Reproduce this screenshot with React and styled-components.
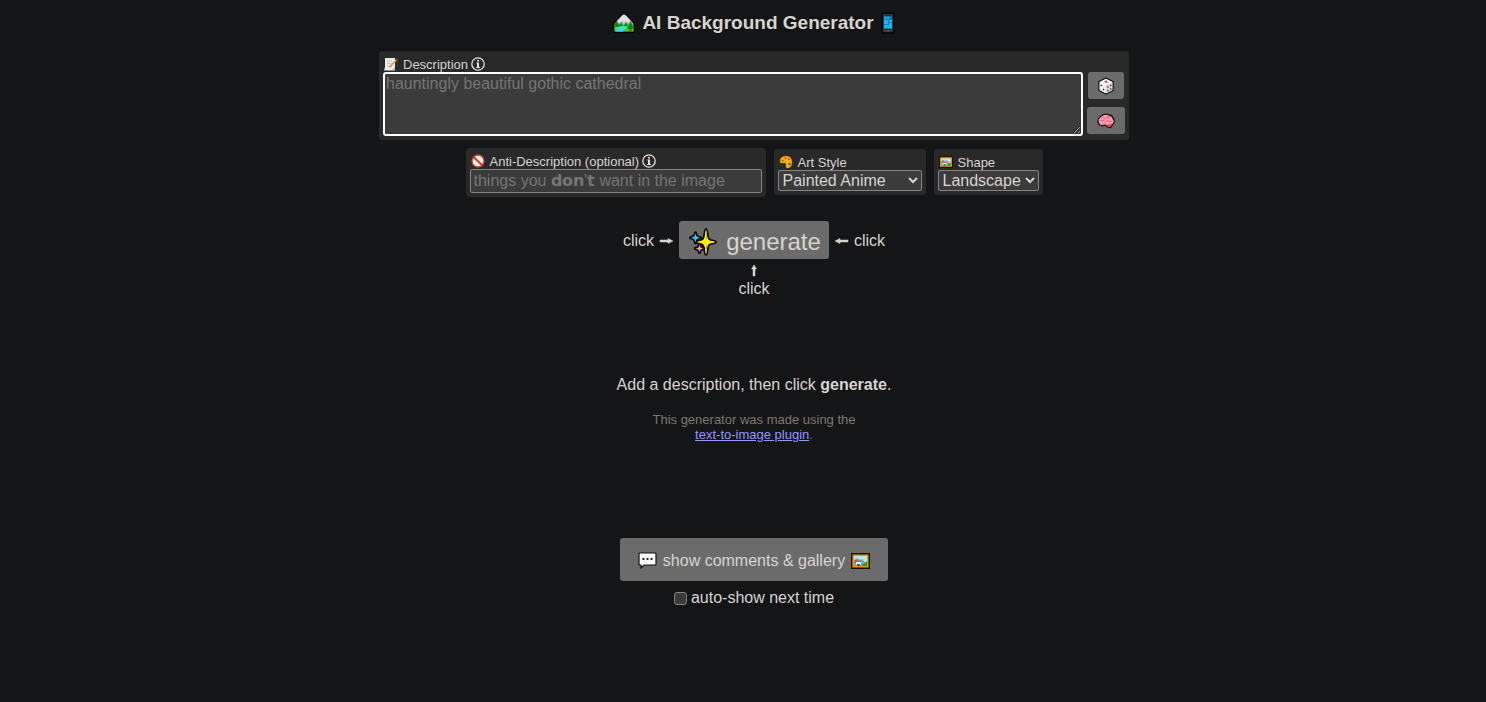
import React, { useState } from "react";
import styled, { createGlobalStyle } from "styled-components";

const GlobalStyle = createGlobalStyle`
  html {
    color-scheme: dark;
  }
  body {
    margin: 0;
    background: #131516;
    color: #d8d4cf;
    font-family: "Liberation Sans", Arial, sans-serif;
    font-size: 16px;
    line-height: 18px;
  }
  * {
    box-sizing: border-box;
  }
`

const Page = styled.main`
  display: flex;
  flex-direction: column;
  align-items: center;
  padding: 12px 0 40px 22px;
`

const Title = styled.h1`
  display: flex;
  align-items: center;
  gap: 7px;
  margin: 0 0 17px;
  font-size: 19px;
  line-height: 22px;
`

const Icon = styled.svg`
  display: block;
  flex: none;
  width: ${(props) => props.$w}px;
  height: ${(props) => props.$h || props.$w}px;
`

const Panel = styled.section`
  padding: 5px 4px 4px;
  border-radius: 3px;
  background: #292929;
`

const DescriptionPanel = styled(Panel)`
  width: 100%;
  max-width: 750px;
`

const AntiPanel = styled(Panel)`
  width: 300px;
`

const SelectPanel = styled(Panel)`
  margin-top: 1px;
`

const Label = styled.label`
  display: flex;
  align-items: center;
  height: 16px;
  padding-left: 1px;
  font-size: 13px;
  line-height: 16px;
  white-space: nowrap;
`

const LabelText = styled.span`
  margin: 0 3px 0 5px;
  padding-top: 2px;
`

const DescriptionRow = styled.div`
  display: flex;
  gap: 4px;
`

const Textarea = styled.textarea`
  display: block;
  flex: 1;
  min-width: 0;
  height: 64px;
  margin: 0;
  padding: 1px;
  border: 2px solid #fff;
  border-radius: 3px;
  outline: none;
  background: #3b3b3b;
  color: #d8d4cf;
  font: 16px/18px "Liberation Sans", Arial, sans-serif;
  resize: vertical;
  &::placeholder {
    color: #757575;
  }
`

const SideButtons = styled.div`
  display: flex;
  flex-direction: column;
  align-items: center;
  gap: 8px;
`

const Button = styled.button`
  display: flex;
  align-items: center;
  justify-content: center;
  margin: 0;
  padding: 0 10px;
  border: none;
  border-radius: 3px;
  background: #6b6b6b;
  color: #d8d4cf;
  font: 16px/18px "Liberation Sans", Arial, sans-serif;
  cursor: pointer;
`

const SmallButton = styled(Button)`
  height: 27px;
`

const GenerateButton = styled(Button)`
  gap: 9px;
  width: 150px;
  height: 38px;
  padding: 4px 0 0 2px;
  font-size: 24px;
  line-height: 28px;
`

const CommentsButton = styled(Button)`
  gap: 6px;
  height: 43px;
  padding: 2px 18px 0;
`

const Options = styled.div`
  display: flex;
  flex-wrap: wrap;
  align-items: flex-start;
  justify-content: center;
  gap: 8px;
  margin: 8px 0 24px;
`

const Input = styled.input`
  display: block;
  width: 100%;
  height: 24px;
  margin: 0;
  padding: 1px 3px;
  border: 1px solid #858585;
  border-radius: 2px;
  background: #3b3b3b;
  color: #d8d4cf;
  font: 16px/18px "Liberation Sans", Arial, sans-serif;
  &::placeholder {
    color: #757575;
  }
`

const Select = styled.select`
  display: block;
  width: ${(props) => props.$width}px;
  height: 21px;
  margin: 0;
  padding: 0;
  border: 1px solid #858585;
  border-radius: 2px;
  background: #3b3b3b;
  color: #d8d4cf;
  font: 16px/18px "Liberation Sans", Arial, sans-serif;
`

const GenerateRow = styled.div`
  display: flex;
  align-items: center;
  gap: 5px;
`

const ClickHint = styled.div`
  display: flex;
  flex-direction: ${(props) => (props.$below ? "column" : "row")};
  align-items: center;
  gap: ${(props) => (props.$below ? 3 : 5)}px;
  padding-top: ${(props) => (props.$below ? 5 : 2)}px;
`

const Message = styled.p`
  margin: 78px 0 18px;
`

const Credit = styled.p`
  margin: 0 0 96px;
  color: #7d7973;
  font-size: 13px;
  line-height: 15px;
  text-align: center;
`

const Link = styled.a`
  color: #9696ff;
`

const AutoShow = styled.label`
  display: flex;
  align-items: center;
  gap: 4px;
  margin-top: 8px;
`

const Checkbox = styled.input`
  appearance: none;
  width: 13px;
  height: 13px;
  margin: 0;
  border: 1px solid #858585;
  border-radius: 3px;
  background: #3b3b3b;
  &:checked {
    background: #9696ff;
  }
`

function MountainIcon() {
  return (
    <Icon $w={22} $h={20} viewBox="0 0 22 20" aria-hidden="true">
      <path d="M1 10 9 2q2-2 4 0l8 8v9H1z" fill="#b5b5b5" stroke="#000" strokeWidth="1.500" />
      <path d="M4 8 9 2.500q2-2 4 0L18 8l-3 2-2-2-2 2-2-2-3 2z" fill="#dedede" />
      <path d="M1.500 12 5 10l3 2 3-1 3 1 2-2 4.500 3v5.500h-19z" fill="#3ddb1e" />
      <path d="m4 8 3 6H1.500v-3zM8 9l2 4H6zM13 9l2 4h-4z" fill="#0c8423" />
      <path d="M2 15q3-2 8-1.500 4 0 3 2-3 1-3 3H3q1-2 3-2-2-1-4-1.500z" fill="#3fd7f7" />
      <path d="M16.500 16h2v3h-2z" fill="#b03b18" />
      <path d="m17.500 8-3.500 8h7z" fill="#0c8423" />
    </Icon>
  )
}

function PhoneIcon() {
  return (
    <Icon $w={14} $h={22} viewBox="0 0 14 22" aria-hidden="true">
      <rect x="1" y="1" width="12" height="20" rx="1" fill="#303234" stroke="#050505" strokeWidth="1.500" />
      <path d="M3 4h8v13H3z" fill="#067cae" />
      <path d="M3 5h2v2H3zM6 5h2v2H6zM3 8h4v4H3zM8 8h3v2H8zM8 11h3v2H8zM3 13h8v3H3z" fill="#12b8fb" />
      <path d="M5 19h4" stroke="#555" />
    </Icon>
  )
}

function NoteIcon() {
  return (
    <Icon $w={14} viewBox="0 0 14 14" aria-hidden="true">
      <path d="M1 1h10v12.500H0L1 10z" fill="#ececec" />
      <path d="M3 4h5M3 6.500h4M3 9h2" stroke="#c4c4c4" />
      <path d="m6.500 9 6-6" stroke="#e7a02c" strokeWidth="1.700" />
      <path d="m5.500 10 1.500-1M12.500 3l1-1" stroke="#b84b32" strokeWidth="1.200" />
      <path d="m8 13 3-3v3z" fill="#bbb" />
    </Icon>
  )
}

function InfoIcon() {
  return (
    <Icon $w={14} viewBox="0 0 14 14" aria-hidden="true">
      <circle cx="7" cy="7" r="6.200" fill="none" stroke="#e6e1dc" strokeWidth="1.300" />
      <path d="M6 3h2v1.500H6zM5.500 5.500H8V10h1v1H5.200v-1H6V6.500h-.5z" fill="#e6e1dc" />
    </Icon>
  )
}

function ProhibitedIcon() {
  return (
    <Icon $w={14} viewBox="0 0 14 14" aria-hidden="true">
      <circle cx="7" cy="7" r="6" fill="#fff1ec" stroke="#c5402c" strokeWidth="1.300" />
      <path d="m2.500 3 9 8.500" stroke="#d62f20" strokeWidth="1.800" />
    </Icon>
  )
}

function PaletteIcon() {
  return (
    <Icon $w={14} viewBox="0 0 14 14" aria-hidden="true">
      <path d="M8 .7C3 .3.300 3 .6 6.500c.2 2 2 2.500 3.500 2 2-.6 3 .3 2.500 1.500-.7 2 .1 3.400 2 3.400 3 0 5-3 4.800-6.400C13.200 3 11 .9 8 .7z" fill="#ffb000" stroke="#110900" strokeWidth=".6" />
      <circle cx="3.500" cy="5.500" r="1" fill="#168c2c" />
      <circle cx="6.500" cy="3" r="1" fill="#e13a27" />
      <circle cx="10" cy="4" r="1" fill="#a85a3c" />
      <circle cx="10.500" cy="9" r="1.200" fill="#1769d2" />
    </Icon>
  )
}

function PictureIcon({ w, h }) {
  return (
    <Icon $w={w} $h={h} viewBox="0 0 19 16" aria-hidden="true">
      <path d="M.7.7h17.600v14.600H.7z" fill="#e99b00" stroke="#171100" strokeWidth="1.400" />
      <path d="M3 3h13v10H3z" fill="#b4e8fb" />
      <path d="m3 7 3-2 3 2 2-1 3 3v4H3z" fill="#72a6c0" />
      <path d="m11 13 1-2 2-1 2-2v5z" fill="#15a32a" />
      <path d="M4 7h1l2 1h2l1-1v3H4z" fill="#e13b2c" />
      <path d="M5 9h5v3H5z" fill="#f5f5f5" />
      <path d="M6 11h3v2H6z" fill="#66434a" />
    </Icon>
  )
}

function DiceIcon() {
  return (
    <Icon $w={16} $h={18} viewBox="0 0 16 18" aria-hidden="true">
      <path d="m8 1 7 3.500v9L8 17l-7-3.500v-9z" fill="#fafafa" stroke="#111" strokeWidth="1.300" strokeLinejoin="round" />
      <path d="m1.700 5.300 6.300 3v8l-6.300-3.200z" fill="#ececec" />
      <path d="m14.300 5.300-6.300 3v8l6.300-3.200z" fill="#d9d9d9" />
      <ellipse cx="8" cy="4.800" rx="1.500" ry="1" fill="#e32c3c" />
      <g fill="#222">
        <circle cx="3.300" cy="8.500" r=".8" />
        <circle cx="5.500" cy="12.500" r=".8" />
        <circle cx="10" cy="10" r=".8" />
        <circle cx="12.800" cy="8.500" r=".8" />
        <circle cx="10" cy="13.500" r=".8" />
        <circle cx="12.800" cy="12" r=".8" />
      </g>
    </Icon>
  )
}

function BrainIcon() {
  return (
    <Icon $w={18} $h={16} viewBox="0 0 18 16" aria-hidden="true">
      <path d="M4 3q4-3 8-1 3 0 4 3 3 4-1 7-1 4-4 2l-3-2q-4 2-6-1-3-4 2-8z" fill="#ff9bae" stroke="#171214" strokeWidth="1.300" />
      <path d="m10 12 5-1q-1 4-4 2z" fill="#e52c38" />
      <path d="m5 4 2 2 2-1M3 8l3-1 1 2M10 3v2l3-1M9 9l2-2 2 2 2-1M5 11l3-1" fill="none" stroke="#e2667f" />
    </Icon>
  )
}

function SparklesIcon() {
  return (
    <Icon $w={28} viewBox="0 0 28 28" aria-hidden="true">
      <g stroke="#000" strokeWidth="1.600" strokeLinejoin="round">
        <path d="M17 1c1.600 0 1.500 4 2 7q.5 3.500 3 4c3 .5 5 .5 5 2s-2 1.500-5 2q-2.500.5-3 4c-.5 3-.4 7-2 7s-1.500-4-2-7q-.5-3.500-3-4c-3-.5-5-.5-5-2s2-1.500 5-2q2.500-.5 3-4c.5-3 .4-7 2-7z" fill="#ffec08" />
        <path d="M6.500 4c1 0 .9 1.500 1.300 3 .3 1 .7 1.300 1.700 1.500 1.500.3 3 .3 3 1.300s-1.500 1-3 1.300c-1 .2-1.400.5-1.700 1.500-.4 1.500-.3 3-1.300 3s-.9-1.500-1.300-3c-.3-1-.7-1.300-1.700-1.500-1.500-.3-2.800-.3-2.800-1.300s1.300-1 2.800-1.300c1-.2 1.400-.5 1.700-1.500.4-1.500.3-3 1.300-3z" fill="#35c6f4" />
        <path d="M10.500 15.500c1 0 .8 1.300 1.200 2.500q.3 1 1.300 1.300c1.200.4 2.500.2 2.500 1.200s-1.300.8-2.500 1.200q-1 .3-1.300 1.300c-.4 1.200-.2 2.500-1.200 2.500s-.8-1.300-1.200-2.500q-.3-1-1.300-1.300c-1.200-.4-2.500-.2-2.500-1.200s1.300-.8 2.500-1.200q1-.3 1.300-1.300c.4-1.200.2-2.500 1.200-2.500z" fill="#ff91ba" />
      </g>
      <path d="M17 2q1 5 1 8l-1 2zM17 26q1-5 1-8l-1-2z" fill="#c9ae00" />
    </Icon>
  )
}

function ArrowIcon({ angle }) {
  const w = angle === 90 ? 8 : 15
  const h = angle === 90 ? 13 : 8
  const paths = {
    0: "M1 3h8V1.500L14 4 9 6.500V5H1z",
    90: "M3 12V5H1.500L4 1l2.500 4H5v7z",
    180: "M14 3H6V1.500L1 4l5 2.500V5h8z"
  }
  return (
    <Icon $w={w} $h={h} viewBox={`0 0 ${w} ${h}`} aria-hidden="true">
      <path d={paths[angle]} fill="#d8d4cf" stroke="#d8d4cf" strokeWidth=".5" />
    </Icon>
  )
}

function SpeechIcon() {
  return (
    <Icon $w={19} $h={17} viewBox="0 0 19 17" aria-hidden="true">
      <path d="M2 1h15q1 0 1 1v10q0 1-1 1H6l-3 3v-3H2q-1 0-1-1V2q0-1 1-1z" fill="#fff" stroke="#111" strokeWidth="1.200" />
      <path d="M4.500 6h2v2h-2zM8.500 6h2v2h-2zM12.500 6h2v2h-2z" fill="#252525" />
    </Icon>
  )
}

function App() {
  const [description, setDescription] = useState("")
  const [anti, setAnti] = useState("")
  const [autoShow, setAutoShow] = useState(false)

  return (
    <>
      <GlobalStyle />
      <Page>
        <Title>
          <MountainIcon />
          <span>AI Background Generator</span>
          <PhoneIcon />
        </Title>

        <DescriptionPanel>
          <Label htmlFor="description">
            <NoteIcon />
            <LabelText>Description</LabelText>
            <InfoIcon />
          </Label>
          <DescriptionRow>
            <Textarea
              id="description"
              autoFocus
              value={description}
              onChange={(e) => setDescription(e.target.value)}
              placeholder="hauntingly beautiful gothic cathedral"
            />
            <SideButtons>
              <SmallButton type="button" aria-label="Random description">
                <DiceIcon />
              </SmallButton>
              <SmallButton type="button" aria-label="Improve description">
                <BrainIcon />
              </SmallButton>
            </SideButtons>
          </DescriptionRow>
        </DescriptionPanel>

        <Options>
          <AntiPanel>
            <Label htmlFor="anti">
              <ProhibitedIcon />
              <LabelText>Anti-Description (optional)</LabelText>
              <InfoIcon />
            </Label>
            <Input
              id="anti"
              value={anti}
              onChange={(e) => setAnti(e.target.value)}
              placeholder="things you 𝗱𝗼𝗻'𝘁 want in the image"
            />
          </AntiPanel>
          <SelectPanel>
            <Label htmlFor="style">
              <PaletteIcon />
              <LabelText>Art Style</LabelText>
            </Label>
            <Select id="style" $width={144}>
              <option>Painted Anime</option>
            </Select>
          </SelectPanel>
          <SelectPanel>
            <Label htmlFor="shape">
              <PictureIcon w={14} h={12} />
              <LabelText>Shape</LabelText>
            </Label>
            <Select id="shape" $width={101}>
              <option>Landscape</option>
            </Select>
          </SelectPanel>
        </Options>

        <GenerateRow>
          <ClickHint>
            click <ArrowIcon angle={0} />
          </ClickHint>
          <GenerateButton type="button">
            <SparklesIcon />
            generate
          </GenerateButton>
          <ClickHint>
            <ArrowIcon angle={180} /> click
          </ClickHint>
        </GenerateRow>
        <ClickHint $below>
          <ArrowIcon angle={90} />
          click
        </ClickHint>

        <Message>
          Add a description, then click <b>generate</b>.
        </Message>
        <Credit>
          This generator was made using the
          <br />
          <Link href="#plugin">text-to-image plugin</Link>.
        </Credit>

        <CommentsButton type="button">
          <SpeechIcon />
          show comments &amp; gallery
          <PictureIcon w={19} h={16} />
        </CommentsButton>
        <AutoShow>
          <Checkbox type="checkbox" checked={autoShow} onChange={(e) => setAutoShow(e.target.checked)} />
          auto-show next time
        </AutoShow>
      </Page>
    </>
  )
}

export default App
